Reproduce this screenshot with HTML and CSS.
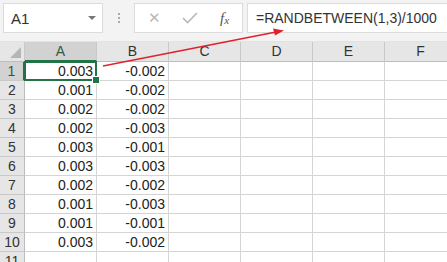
FILE: index.html
```html
<!DOCTYPE html>
<html lang="en">
  <head>
    <meta charset="UTF-8" />
    <title>Sheet</title>
    <link rel="stylesheet" href="styles.css">
  </head>
  <body>
    <div class="toolbar">
      <div class="name-box">
        <span>A1</span>
        <span class="caret"></span>
      </div>
      <div class="grip"><i></i><i></i><i></i></div>
      <div class="func-box">
        <span class="icon-x">&#x2715;</span>
        <svg class="icon-check" width="16" height="12" viewBox="0 0 16 12">
          <path d="M1 6 L5.5 10.5 L15 1" fill="none" stroke="#b8b8b8" stroke-width="1.6" />
        </svg>
        <span class="icon-fx">f<sub>x</sub></span>
      </div>
      <div class="formula">=RANDBETWEEN(1,3)/1000</div>
    </div>

    <div class="sheet">
      <div class="corner"><span class="tri"></span></div>
      <div class="col-head selected">A</div>
      <div class="col-head">B</div>
      <div class="col-head">C</div>
      <div class="col-head">D</div>
      <div class="col-head">E</div>
      <div class="col-head">F</div>

      <div class="row-head selected">1</div>
      <div class="cell active">0.003</div><div class="cell">-0.002</div><div class="cell"></div><div class="cell"></div><div class="cell"></div><div class="cell"></div>
      <div class="row-head">2</div>
      <div class="cell">0.001</div><div class="cell">-0.002</div><div class="cell"></div><div class="cell"></div><div class="cell"></div><div class="cell"></div>
      <div class="row-head">3</div>
      <div class="cell">0.002</div><div class="cell">-0.002</div><div class="cell"></div><div class="cell"></div><div class="cell"></div><div class="cell"></div>
      <div class="row-head">4</div>
      <div class="cell">0.002</div><div class="cell">-0.003</div><div class="cell"></div><div class="cell"></div><div class="cell"></div><div class="cell"></div>
      <div class="row-head">5</div>
      <div class="cell">0.003</div><div class="cell">-0.001</div><div class="cell"></div><div class="cell"></div><div class="cell"></div><div class="cell"></div>
      <div class="row-head">6</div>
      <div class="cell">0.003</div><div class="cell">-0.003</div><div class="cell"></div><div class="cell"></div><div class="cell"></div><div class="cell"></div>
      <div class="row-head">7</div>
      <div class="cell">0.002</div><div class="cell">-0.002</div><div class="cell"></div><div class="cell"></div><div class="cell"></div><div class="cell"></div>
      <div class="row-head">8</div>
      <div class="cell">0.001</div><div class="cell">-0.003</div><div class="cell"></div><div class="cell"></div><div class="cell"></div><div class="cell"></div>
      <div class="row-head">9</div>
      <div class="cell">0.001</div><div class="cell">-0.001</div><div class="cell"></div><div class="cell"></div><div class="cell"></div><div class="cell"></div>
      <div class="row-head">10</div>
      <div class="cell">0.003</div><div class="cell">-0.002</div><div class="cell"></div><div class="cell"></div><div class="cell"></div><div class="cell"></div>
      <div class="row-head">11</div>
      <div class="cell"></div><div class="cell"></div><div class="cell"></div><div class="cell"></div><div class="cell"></div><div class="cell"></div>
    </div>

    <!-- annotation arrow pointing from A1 to the formula -->
    <svg class="arrow" width="447" height="262" viewBox="0 0 447 262">
      <line x1="103" y1="66" x2="276" y2="32" stroke="#e0202e" stroke-width="1.3" />
      <polygon points="284,30.5 273,28.5 275,35.5" fill="#e0202e" />
    </svg>
  </body>
</html>
```

FILE: styles.css
```css
* {
  margin: 0;
  padding: 0;
  box-sizing: border-box;
}

body {
  width: 447px;
  height: 262px;
  overflow: hidden;
  background-color: #ffffff;
  font-family: "Liberation Sans", Arial, sans-serif;
  color: #222;
  position: relative;
}

.toolbar {
  display: flex;
  align-items: flex-start;
  height: 42px;
  padding: 3px 0 0 3px;
  background-color: #f3f3f3;
  border-bottom: 1px solid #e2e2e2;
}

.name-box {
  width: 100px;
  height: 30px;
  background-color: #ffffff;
  border: 1px solid #dcdcdc;
  display: flex;
  align-items: center;
  justify-content: space-between;
  padding: 0 6px 0 7px;
  font-size: 15px;
  color: #333;
}

.caret {
  width: 0;
  height: 0;
  border-left: 4px solid transparent;
  border-right: 4px solid transparent;
  border-top: 4px solid #777;
}

.grip {
  width: 31px;
  height: 30px;
  display: flex;
  flex-direction: column;
  align-items: center;
  justify-content: center;
  gap: 2px;
}

.grip i {
  width: 2px;
  height: 2px;
  background-color: #aaa;
}

.func-box {
  width: 109px;
  height: 30px;
  background-color: #ffffff;
  border: 1px solid #dcdcdc;
  display: flex;
  align-items: center;
  padding-left: 13px;
}

.icon-x {
  font-size: 15px;
  color: #b8b8b8;
  width: 14px;
}

.icon-check {
  margin-left: 20px;
}

.icon-fx {
  margin-left: 22px;
  font-family: "Liberation Serif", serif;
  font-style: italic;
  font-size: 15px;
  color: #555;
}

.icon-fx sub {
  font-size: 11px;
  vertical-align: -1px;
}

.formula {
  flex: 1;
  height: 30px;
  margin-left: 4px;
  background-color: #ffffff;
  border: 1px solid #dcdcdc;
  border-right: none;
  padding-left: 8px;
  display: flex;
  align-items: center;
  font-size: 14px;
  color: #333;
  white-space: nowrap;
}

.sheet {
  display: grid;
  grid-template-columns: 25px 72px 72px 72px 72px 72px 72px;
  grid-template-rows: 20px repeat(11, 19px);
  font-size: 14px;
}

.corner {
  background-color: #e6e6e6;
  border-right: 1px solid #c9c9c9;
  border-bottom: 1px solid #bdbdbd;
  position: relative;
}

.tri {
  position: absolute;
  right: 3px;
  bottom: 3px;
  width: 0;
  height: 0;
  border-left: 11px solid transparent;
  border-bottom: 11px solid #b5b5b5;
}

.col-head {
  background-color: #e6e6e6;
  border-right: 1px solid #c9c9c9;
  border-bottom: 1px solid #bdbdbd;
  text-align: center;
  line-height: 19px;
  color: #333;
}

.row-head {
  background-color: #e6e6e6;
  border-right: 1px solid #bdbdbd;
  border-bottom: 1px solid #c9c9c9;
  text-align: center;
  line-height: 18px;
  color: #333;
}

.col-head.selected {
  background-color: #d2d2d2;
  border-bottom: 2px solid #217346;
  color: #2e5a42;
}

.row-head.selected {
  background-color: #d2d2d2;
  border-right: 2px solid #217346;
  color: #2e5a42;
}

.cell {
  border-right: 1px solid #d4d4d4;
  border-bottom: 1px solid #d4d4d4;
  text-align: right;
  padding-right: 3px;
  line-height: 18px;
}

.cell.active {
  position: relative;
}

.cell.active::before {
  content: "";
  position: absolute;
  left: -1px;
  top: -1px;
  right: -1px;
  bottom: -1px;
  border: 2px solid #217346;
}

.cell.active::after {
  content: "";
  position: absolute;
  right: -4px;
  bottom: -4px;
  width: 6px;
  height: 6px;
  background-color: #217346;
  border: 1px solid #ffffff;
}

.arrow {
  position: absolute;
  left: 0;
  top: 0;
  pointer-events: none;
}
```
